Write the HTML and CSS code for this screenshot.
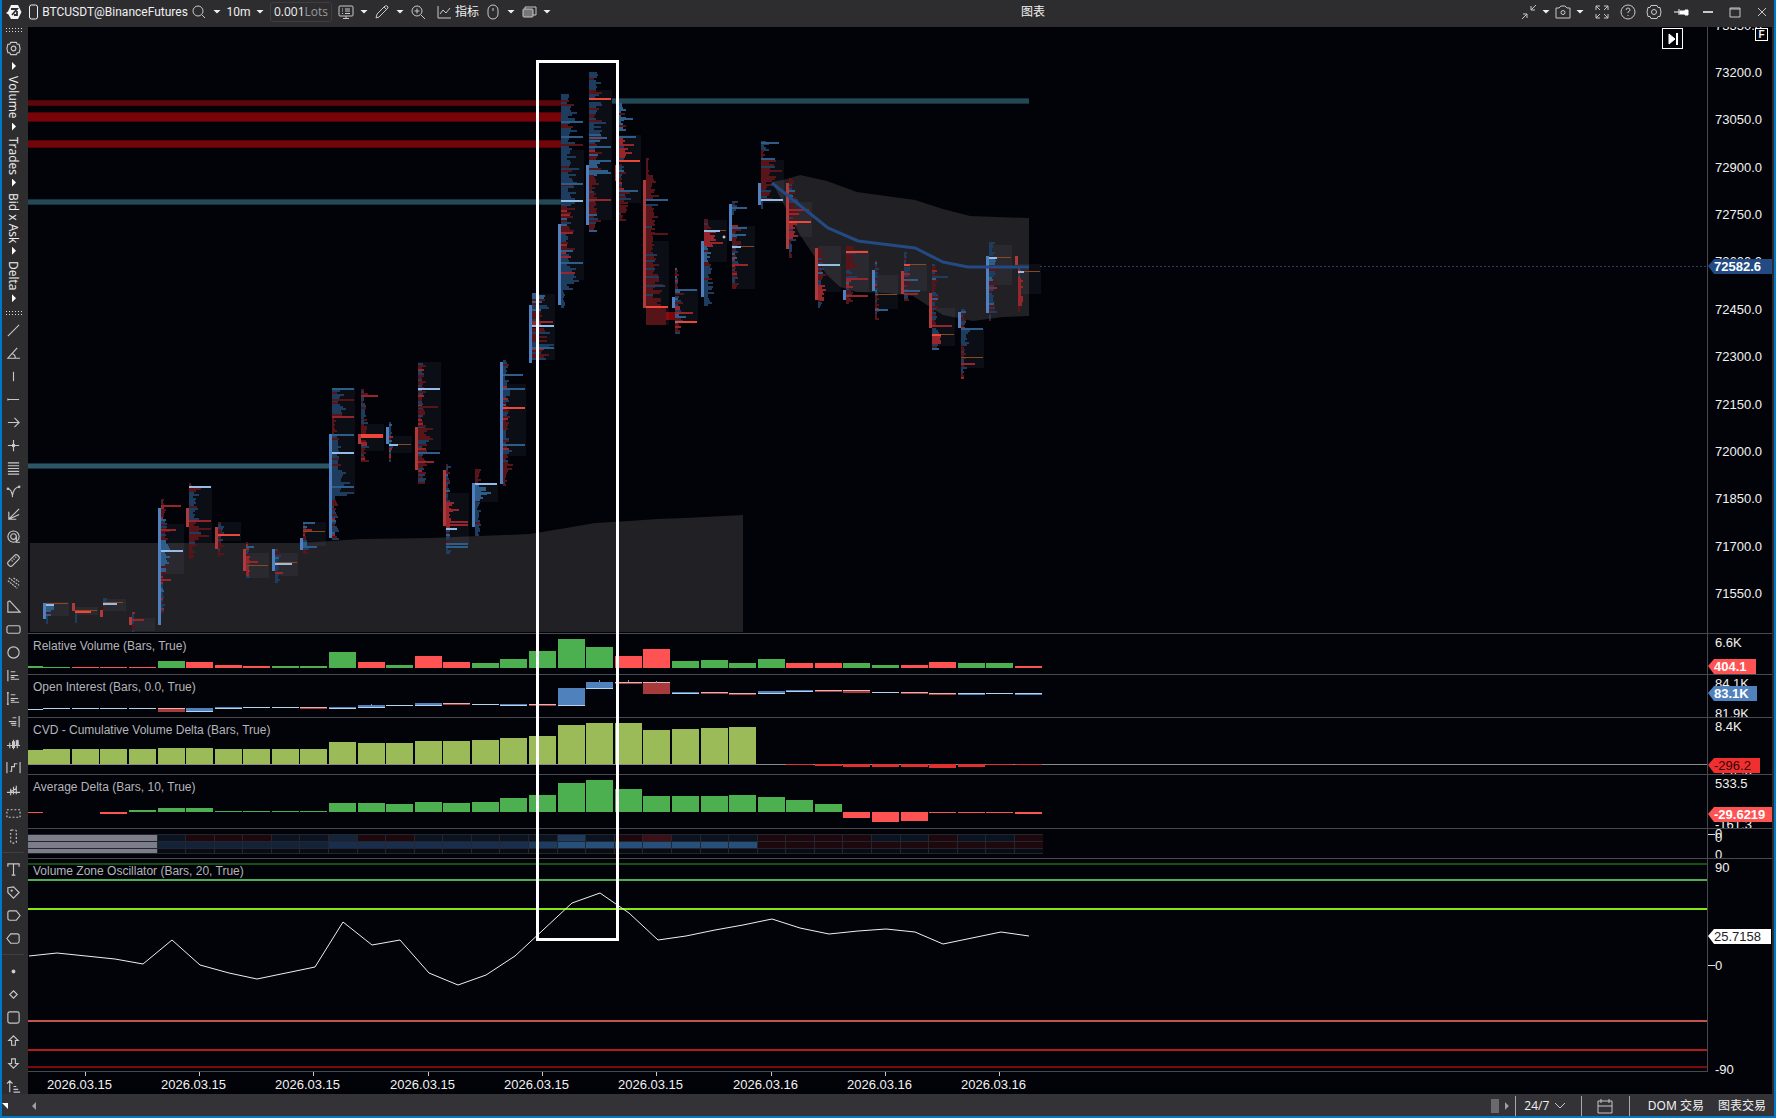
FILE: index.html
```html
<!DOCTYPE html>
<html lang="zh">
<head>
<meta charset="utf-8">
<title>图表</title>
<link rel="stylesheet" href="styles.css">
</head>
<body>
<div class="window">
  <header class="toolbar">
    <div class="tools">
      <svg class="logo" viewBox="0 0 16 16"><path fill="#f4f4f4" d="M5 1h7l3.500 7-3.500 7H5L2.500 10.500 0 9l2-1.500z"/><path fill="none" stroke="#2d2d30" stroke-width="1.800" d="M5 5h6l-5 6M11 7v4H8"/></svg>
      <svg class="phone" viewBox="0 0 10 16"><rect x="1" y="1" width="8" height="14" rx="2"/></svg>
      <button class="symbol">BTCUSDT@BinanceFutures</button>
      <button aria-label="Search"><svg viewBox="0 0 16 16"><circle cx="7" cy="7" r="5"/><path d="M11 11l3 3"/></svg></button>
      <button class="caret" aria-label="Search options"></button>
      <button class="interval">10m</button>
      <button class="caret" aria-label="Intervals"></button>
      <button class="lots"><b>0.001</b>Lots</button>
      <button aria-label="Template"><svg viewBox="0 0 16 16"><rect x="1" y="2" width="14" height="10" rx="1"/><path d="M4 5h1M7 5h5M4 7h1M7 7h5M4 9.500h1M7 9.500h5M8 12v2M5 14.500h6"/></svg></button>
      <button class="caret" aria-label="Template options"></button>
      <button aria-label="Draw"><svg viewBox="0 0 16 16"><path d="M2 14l1-4 8-8q2-1 3 1 0 1-1 2l-8 8zM10 3l3 3"/></svg></button>
      <button class="caret" aria-label="Drawing options"></button>
      <button aria-label="Zoom in"><svg viewBox="0 0 16 16"><circle cx="7" cy="7" r="5"/><path d="M11 11l4 4M4.500 7h5M7 4.500v5"/></svg></button>
      <button class="indicators"><svg viewBox="0 0 16 16"><path d="M2 2v12h13M4 10l3-4 3 3 4-5"/></svg>指标</button>
      <button aria-label="Mouse"><svg viewBox="0 0 16 16"><rect x="3" y="1" width="10" height="14" rx="5"/><path d="M8 4v3"/></svg></button>
      <button class="caret" aria-label="Mouse options"></button>
      <button aria-label="Windows"><svg viewBox="0 0 16 16"><rect x="2" y="5" width="10" height="8" rx="1" fill="#77777a"/><path d="M4 5V3h11v8h-3"/></svg></button>
      <button class="caret" aria-label="Window options"></button>
    </div>
    <h1>图表</h1>
    <div class="controls">
      <button aria-label="Collapse"><svg viewBox="0 0 16 16"><path d="M1 15l5-5M2 10h4v4M15 1l-5 5M10 2v4h4"/></svg></button>
      <button class="caret" aria-label="Collapse options"></button>
      <button aria-label="Snapshot"><svg viewBox="0 0 16 16"><path d="M1 4h3l2-2h4l2 2h3v10H1z"/><circle cx="8" cy="8.500" r="2"/></svg></button>
      <button class="caret" aria-label="Snapshot options"></button>
      <button aria-label="Full screen"><svg viewBox="0 0 16 16"><path d="M2 6V2h4M2 2l4 4M10 2h4v4M14 2l-4 4M2 10v4h4M2 14l4-4M14 10v4h-4M14 14l-4-4"/></svg></button>
      <button aria-label="Help"><svg viewBox="0 0 16 16"><circle cx="8" cy="8" r="7"/><path d="M6 6q0-2 2-2t2 2q0 1-2 2v1M8 11v1"/></svg></button>
      <button aria-label="Settings"><svg viewBox="0 0 16 16"><path d="M5 1.500h6l1 2h2l1 4.500-1 4.500h-2l-1 2H5l-1-2H2L1 8l1-4.500h2z"/><circle cx="8" cy="8" r="2.500"/></svg></button>
      <button aria-label="Pin"><svg viewBox="0 0 16 16"><path fill="#fff" stroke="#fff" d="M1 8h5M6 5v6M7 7h5V6h3v5h-3v-1H7z"/></svg></button>
      <button aria-label="Minimize"><svg viewBox="0 0 16 16"><path class="thick" d="M3 8h10"/></svg></button>
      <button aria-label="Maximize"><svg viewBox="0 0 16 16"><path d="M3 4h10v9H3zM3 5h10"/></svg></button>
      <button aria-label="Close"><svg viewBox="0 0 16 16"><path d="M4 4l8 8M12 4l-8 8"/></svg></button>
    </div>
  </header>

  <div class="body">
    <nav class="side">
      <i class="grip"></i>
      <button class="gear" aria-label="Settings"><svg viewBox="0 0 16 16"><path d="M5 1.500h6l1 2h2l1 4.500-1 4.500h-2l-1 2H5l-1-2H2L1 8l1-4.500h2z"/><circle cx="8" cy="8" r="2.500"/></svg></button>
      <i class="arrow"></i>
      <button class="mode">Volume</button><i class="arrow"></i>
      <button class="mode">Trades</button><i class="arrow"></i>
      <button class="mode">Bid x Ask</button><i class="arrow"></i>
      <button class="mode">Delta</button><i class="arrow"></i>
      <i class="grip"></i>
      <div class="set">
        <button aria-label="Line"><svg viewBox="0 0 16 16"><path d="M2 14L14 2"/></svg></button>
        <button aria-label="Angle"><svg viewBox="0 0 16 16"><path d="M12 2L2 13h13M6 8q4 1 4 5"/></svg></button>
        <button aria-label="Vertical line"><svg viewBox="0 0 16 16"><path d="M8 3v10"/></svg></button>
        <button aria-label="Horizontal line"><svg viewBox="0 0 16 16"><path d="M2 8h12M2 7v2"/></svg></button>
        <button aria-label="Ray"><svg viewBox="0 0 16 16"><path d="M2 8h12M9 3l5 5-5 5"/></svg></button>
        <button aria-label="Cross"><svg viewBox="0 0 16 16"><path d="M2 8h12M8 2v12M7 7h2v2H7z"/></svg></button>
        <button aria-label="Levels"><svg viewBox="0 0 16 16"><path d="M2 2h12M2 5h12M2 8h12M2 11h12M2 14h12"/></svg></button>
        <button aria-label="Pitchfork"><svg viewBox="0 0 16 16"><path d="M2 5q4 0 5 9M7 12q1-8 7-9"/><circle cx="2" cy="5" r=".8"/><circle cx="14" cy="3" r=".8"/></svg></button>
        <button aria-label="Fan"><svg viewBox="0 0 16 16"><path d="M14 2L3 13M3 5v8h8M3 13l11-5"/></svg></button>
        <button aria-label="Spiral"><svg viewBox="0 0 16 16"><circle cx="8" cy="7" r="6"/><circle cx="8" cy="7" r="3"/><path d="M11 7v6h4"/></svg></button>
        <button aria-label="Ruler"><svg viewBox="0 0 16 16"><rect x="1" y="5" width="14" height="6" rx="2" transform="rotate(-45 8 8)"/><path d="M6 8l1 1M8 6l1 1M10 4l1 1"/></svg></button>
        <button aria-label="Channel"><svg viewBox="0 0 16 16"><path stroke-dasharray="2 1" d="M2 5l10 8M3 2l11 8M8 2l6 4"/></svg></button>
        <button aria-label="Triangle"><svg viewBox="0 0 16 16"><path d="M2 14V3l2-1 11 12z"/></svg></button>
        <button aria-label="Rectangle"><svg viewBox="0 0 16 16"><rect x="1" y="4" width="14" height="8" rx="2"/></svg></button>
        <button aria-label="Ellipse"><svg viewBox="0 0 16 16"><circle cx="8" cy="8" r="6"/></svg></button>
        <button aria-label="Left profile"><svg viewBox="0 0 16 16"><path d="M2 2v12M5 4h5M5 8h8M5 12h9M5 10h4"/></svg></button>
        <button aria-label="Dynamic profile"><svg viewBox="0 0 16 16"><path d="M2 1v14M5 4h5M5 8h8M5 12h9M5 10h4M1 2h2M1 14h2"/></svg></button>
        <button aria-label="Right profile"><svg viewBox="0 0 16 16"><path d="M14 2v12M7 4h4M3 8h8M6 12h5M5 10h6"/></svg></button>
        <button aria-label="Bars"><svg viewBox="0 0 16 16"><path d="M1 9h14M4 6v6M8 3v10M12 3v9M7 5h2v6H7zM11 4h2v5h-2z"/></svg></button>
        <button aria-label="Steps"><svg viewBox="0 0 16 16"><path d="M1 2v12M15 2v12M4 12h2V7h3V4h3"/></svg></button>
        <button aria-label="Pattern"><svg viewBox="0 0 16 16"><path d="M1 10h14M5 6v7M8 4v8M11 3v9M5 9l6-3"/></svg></button>
        <button aria-label="Horizontal range"><svg viewBox="0 0 16 16"><rect x="1" y="4" width="14" height="8" stroke-dasharray="2 2"/></svg></button>
        <button aria-label="Vertical range"><svg viewBox="0 0 16 16"><rect x="5" y="1" width="6" height="14" rx="1" stroke-dasharray="2 2"/></svg></button>
      </div>
      <div class="set">
        <button aria-label="Text"><svg viewBox="0 0 16 16"><path d="M2 5V2h12v3M8 2v12M6 14h4"/></svg></button>
        <button aria-label="Tag"><svg viewBox="0 0 16 16"><path d="M2 3l6-1 6 6-6 6-6-6z"/><circle cx="6" cy="6" r=".6"/></svg></button>
        <button aria-label="Right label"><svg viewBox="0 0 16 16"><path d="M4 3h7l4 5-4 5H4q-2 0-2-2V5q0-2 2-2z"/></svg></button>
        <button aria-label="Left label"><svg viewBox="0 0 16 16"><path d="M12 3H5L1 8l4 5h7q2 0 2-2V5q0-2-2-2z"/></svg></button>
      </div>
      <div class="set">
        <button aria-label="Dot"><svg viewBox="0 0 16 16"><circle cx="8" cy="8" r="1.500" fill="#ddd"/></svg></button>
        <button aria-label="Diamond"><svg viewBox="0 0 16 16"><path d="M8 4l4 4-4 4-4-4z"/></svg></button>
        <button aria-label="Square"><svg viewBox="0 0 16 16"><rect x="2" y="2" width="12" height="12" rx="2"/></svg></button>
        <button aria-label="Up"><svg viewBox="0 0 16 16"><path d="M8 3l5 5h-3v5H6V8H3z"/></svg></button>
        <button aria-label="Down"><svg viewBox="0 0 16 16"><path d="M8 13l5-5h-3V3H6v5H3z"/></svg></button>
        <button aria-label="Order"><svg viewBox="0 0 16 16"><path d="M4 14V2M1 5l3-3 3 3M8 8h3M8 11h5M8 14h7"/></svg></button>
      </div>
    </nav>

    <main class="chart">
      <section class="pane price"><svg class="plot" id="price"></svg><svg class="scale" id="price-scale"></svg>
        <button class="jump" aria-label="Latest bar"><svg viewBox="0 0 16 16"><path fill="#fff" stroke="#fff" d="M4 3l6 5-6 5z"/><path class="thick" stroke="#fff" d="M12 2v12"/></svg></button>
        <button class="fix">F</button>
      </section>
      <section class="pane rv"><svg class="plot" id="rv"></svg><svg class="scale" id="rv-scale"></svg><h2>Relative Volume (Bars, True)</h2></section>
      <section class="pane oi"><svg class="plot" id="oi"></svg><svg class="scale" id="oi-scale"></svg><h2>Open Interest (Bars, 0.0, True)</h2></section>
      <section class="pane cvd"><svg class="plot" id="cvd"></svg><svg class="scale" id="cvd-scale"></svg><h2>CVD - Cumulative Volume Delta (Bars, True)</h2></section>
      <section class="pane ad"><svg class="plot" id="ad"></svg><svg class="scale" id="ad-scale"></svg><h2>Average Delta (Bars, 10, True)</h2></section>
      <section class="pane heat"><svg class="plot" id="heat"></svg><svg class="scale" id="heat-scale"></svg></section>
      <section class="pane vzo"><svg class="plot" id="vzo"></svg><svg class="scale" id="vzo-scale"></svg><h2>Volume Zone Oscillator (Bars, 20, True)</h2></section>
      <svg class="dates" id="dates"></svg>
      <div class="mark"></div>
    </main>
  </div>

  <footer class="status">
    <i class="corner"></i>
    <button class="scroll first" aria-label="Scroll left"><i class="left"></i></button>
    <span class="track"></span>
    <span class="thumb"></span>
    <button class="scroll" aria-label="Scroll right"><i class="right"></i></button>
    <button class="session">24/7 <svg viewBox="0 0 16 16"><path d="M3 5l5 5 5-5"/></svg></button>
    <button class="calendar" aria-label="Calendar"><svg viewBox="0 0 16 16"><path d="M1 3h14v12H1zM1 8h14M4 1v4M12 1v4"/></svg></button>
    <button class="trade">DOM 交易</button>
    <button class="trade">图表交易</button>
  </footer>
</div>
<script src="chart.js"></script>
</body>
</html>
```
FILE: styles.css
```css
* { box-sizing: border-box; }
html, body { height: 100%; }
body {
  margin: 0;
  background: #2d2d30;
  color: #f0f0f0;
  font: 12px/16px "Noto Sans", "Noto Sans CJK SC", sans-serif;
}
button {
  margin: 0;
  padding: 0;
  border: 0;
  background: none;
  color: inherit;
  font: inherit;
  display: flex;
  align-items: center;
  justify-content: center;
  flex: none;
}
button svg, .phone {
  width: 16px;
  height: 16px;
  fill: none;
  stroke: #c8c8ca;
  stroke-width: 1;
}
.thick { stroke-width: 2; }
.window {
  height: 100vh;
  min-height: 1100px;
  display: flex;
  flex-direction: column;
  border: solid #0078c8;
  border-width: 0 2px 2px;
}

.toolbar {
  height: 27px;
  flex: none;
  display: flex;
  align-items: center;
  padding: 0 4px 4px;
}
.tools { display: flex; align-items: center; gap: 6px; }
.logo { width: 16px; height: 16px; }
.phone { width: 11px; stroke: #f0f0f0; }
.symbol { font-family: Roboto, sans-serif; width: 140px; white-space: nowrap; }
.interval { width: 23px; font-family: Roboto, sans-serif; }
.caret {
  width: 8px;
  height: 4px;
  background: #f0f0f0;
  clip-path: polygon(0 0, 100% 0, 50% 100%);
}
.lots {
  width: 62px;
  height: 20px;
  border: 1px solid #3e3e42;
  border-radius: 3px;
  color: #9a9a9c;
  font-family: "Open Sans", sans-serif;
}
.lots b { font-weight: 400; color: #f0f0f0; }
.indicators { gap: 3px; margin-left: 4px; }
.toolbar h1 { flex: 1; margin: 0; padding-right: 6px; font: inherit; text-align: center; }
.controls { display: flex; align-items: center; gap: 5px; }
.controls button:nth-child(n+5) { margin-left: 5px; }
.controls button:nth-child(n+8) { margin-left: 6px; }

.body { flex: 1; display: flex; min-height: 0; }
.side {
  width: 26px;
  flex: none;
  display: flex;
  flex-direction: column;
  align-items: center;
  padding-right: 4px;
  overflow: hidden;
}
.side svg { width: 15px; height: 15px; stroke-width: 1.2; }
.grip {
  width: 17px;
  height: 6px;
  flex: none;
  background: radial-gradient(circle, #ddd 30%, transparent 40%) 0 0 / 3px 3px;
}
.gear { height: 24px; margin: 3px 0 2px; }
.arrow {
  width: 4px;
  height: 8px;
  margin: 0 0 6px 2px;
  flex: none;
  background: #fff;
  clip-path: polygon(0 0, 100% 50%, 0 100%);
}
.mode { writing-mode: vertical-rl; margin-bottom: 4px; font-family: "Open Sans", sans-serif; }
.arrow + .grip { margin-top: 2px; }
.set { padding-bottom: 4px; margin-bottom: 5px; border-bottom: 1px solid #3f3f43; }
.grip + .set { padding-top: 3px; }
.set:last-of-type { border: 0; margin: 0; padding: 0; }
.set button { width: 22px; height: 23px; }

.chart {
  flex: 1;
  min-width: 0;
  margin-right: 2px;
  display: grid;
  grid-template-rows: 1fr 41px 43px 57px 54px 30px 214px 22px;
  background: #020308;
  position: relative;
  overflow: hidden;
  font-family: "Liberation Sans", Arial, sans-serif;
}
.pane {
  display: flex;
  min-height: 0;
  min-width: 0;
  position: relative;
  border-top: 1px solid #48484e;
}
.price { border: 0; }
.plot { flex: 1; min-width: 0; height: 100%; display: block; }
.scale { width: 65px; height: 100%; flex: none; overflow: visible; border-left: 1px solid #48484e; }
.price .scale { overflow: hidden; }
.scale text, .dates text { font-size: 13px; fill: #f2f2f2; }
.scale .strong { font-weight: 700; }
.pane h2 {
  position: absolute;
  top: 4px;
  left: 5px;
  margin: 0;
  font: 12px/16px "Liberation Sans", Arial, sans-serif;
  color: #b4b4ba;
}
.vzo .plot { border-bottom: 1px solid #48484e; }
.dates { width: 100%; height: 100%; display: block; }
.jump {
  position: absolute;
  right: 89px;
  top: 1px;
  width: 21px;
  height: 21px;
  border: 1px solid #fff;
}
.fix {
  position: absolute;
  right: 4px;
  top: 1px;
  width: 13px;
  height: 13px;
  border: 1px solid #fff;
  background: #020308;
  font: 700 10px/11px "Liberation Sans", Arial, sans-serif;
}
.mark {
  position: absolute;
  left: 508px;
  top: 33px;
  width: 83px;
  height: 881px;
  border: 3px solid #fff;
}

.status {
  height: 22px;
  flex: none;
  display: flex;
  align-items: center;
  padding: 2px 8px 0 0;
  background: #333337;
}
.corner {
  width: 6px;
  height: 6px;
  background: #fff;
  clip-path: polygon(0 0, 100% 0, 100% 100%);
}
.scroll { width: 16px; height: 20px; }
.first { margin-left: 18px; }
.left, .right { width: 4px; height: 8px; background: #a0a0a2; }
.left { clip-path: polygon(100% 0, 100% 100%, 0 50%); }
.right { clip-path: polygon(0 0, 100% 50%, 0 100%); }
.track { flex: 1; }
.thumb { width: 8px; height: 14px; background: #6a6a6e; }
.session, .calendar { height: 20px; border-left: 1px solid #a8a8aa; }
.session { width: 66px; padding-right: 4px; font-family: "Open Sans", sans-serif; gap: 3px; }
.calendar { width: 48px; }
.trade { margin-left: 14px; }
.calendar + .trade { border-left: 1px solid #a8a8aa; margin: 0; padding-left: 18px; height: 20px; }
```
FILE: chart.js
```js
const NS = 'http://www.w3.org/2000/svg';
const byId = id => document.getElementById(id);

function add(parent, name, attrs, text) {
  const el = document.createElementNS(NS, name);
  for (const key in attrs) el.setAttribute(key, attrs[key]);
  if (text !== undefined) el.textContent = text;
  parent.appendChild(el);
  return el;
}
const rect = (p, x, y, width, height, fill) => add(p, 'rect', { x, y, width, height, fill });
const wideLine = (p, y, color, w) => add(p, 'rect', { x: 0, y, width: '100%', height: w, fill: color });
const shifted = (id, paneTop) => add(byId(id), 'g', { transform: `translate(-28 ${-paneTop})` });

const barX = n => n < 0 ? 28 : Math.round(43.2 + 28.58 * n);
const barW = n => n < 0 ? 15 : 27;

const C = {
  b: '#1e3c5e', r: '#581519', B: '#2f5d8a', R: '#96262b', H: '#ee4638',
  P: '#93bce6', O: '#87491f', body: { b: '#5080bd', r: '#ad3b3d' }
};

/* Price pane: sessions, levels and cluster bars */
const price = shifted('price', 27);

add(price, 'polygon', { fill: '#212024', points: '30,543 302,543 360,539 430,538 530,534 566,528 595,523 629,521 657,519 685,518 743,515 743,632 30,632' });
add(price, 'polygon', { fill: '#212024', points: '772,182 787,179 800,175 827,181 857,192 915,200 943,209 970,216 1029,218 1029,316 1003,317 973,321 943,315 930,307 913,296 887,293 857,292 840,287 827,275 800,235' });

function level(x1, x2, y, h, edge, core) {
  rect(price, x1, y - h / 2, x2 - x1, h, edge);
  rect(price, x1, y - h / 2 + 1, x2 - x1, h - 2, core);
}
level(28, 561, 103, 6, '#4a0508', '#5e0609');
level(28, 561, 117, 10, '#4e0407', '#78040a');
level(28, 561, 144, 8, '#4e0407', '#74040a');
level(28, 561, 202, 6, '#16303c', '#244856');
level(28, 329, 466, 6, '#16303c', '#2b5767');
level(612, 1029, 101, 6, '#16303c', '#244856');
rect(price, 666, 312, 10, 8, '#80040a');

let seed = 41;
const rand = () => (seed = (seed * 16807) % 2147483647) / 2147483647;

/* [bar, direction, bodyTop, bodyBottom, areaTop, areaBottom, profile zones, highlighted rows] */
const clusters = [
  [0, 'b', 603, 619, 602, 616, [[604, 616, 'B', 9], [616, 624, 'b', 3]], [[603, 'O', 22], [604, 'P', 8]]],
  [1, 'r', 603, 611, 607, 615, [[611, 623, 'b', 3]], [[610, 'O', 22], [611, 'H', 16]]],
  [2, 'r', 610, 617, 599, 611, [[598, 610, 'b', 5]], [[602, 'O', 20], [603, 'P', 14]]],
  [3, 'r', 617, 625, 618, 631, [[612, 632, 'm', 4]], [[619, 'R', 12]]],
  [4, 'b', 508, 625, 524, 574, [[499, 524, 'm', 7], [524, 540, 'r', 11], [540, 574, 'B', 12], [574, 614, 'm', 4]], [[505, 'R', 20], [529, 'R', 15], [550, 'P', 22], [579, 'R', 10]]],
  [5, 'r', 508, 527, 486, 543, [[488, 520, 'b', 13], [483, 487, 'r', 6], [520, 545, 'r', 16], [545, 559, 'r', 7]], [[486, 'P', 22], [520, 'R', 22], [528, 'r', 22], [535, 'r', 20]]],
  [6, 'r', 527, 549, 522, 541, [[522, 533, 'b', 8], [527, 556, 'r', 7]], [[534, 'H', 22]]],
  [7, 'r', 549, 571, 553, 578, [[542, 556, 'm', 5], [556, 578, 'R', 7]], [[546, 'B', 8], [561, 'R', 12], [565, 'O', 22]]],
  [8, 'b', 549, 571, 553, 576, [[549, 583, 'm', 7]], [[562, 'O', 22], [563, 'P', 17], [572, 'R', 8]]],
  [9, 'b', 538, 550, 522, 546, [[522, 553, 'm', 6]], [[522, 'B', 12], [529, 'R', 9], [531, 'O', 22], [546, 'B', 14]]],
  [10, 'b', 434, 538, 388, 494, [[388, 416, 'b', 16], [416, 434, 'r', 5], [434, 480, 'b', 16], [480, 496, 'b', 21], [496, 540, 'm', 8]], [[388, 'B', 22], [399, 'r', 22], [416, 'R', 22], [434, 'B', 22], [452, 'P', 22], [486, 'B', 22], [492, 'b', 22]]],
  [11, 'r', 434, 444, 424, 451, [[389, 420, 'b', 8], [420, 433, 'r', 10], [440, 461, 'm', 9]], [[395, 'R', 17], [434, 'H', 22], [436, 'H', 22]]],
  [12, 'b', 427, 444, 436, 453, [[422, 461, 'm', 5]], [[444, 'O', 22], [444, 'P', 9]]],
  [13, 'r', 427, 470, 362, 450, [[363, 428, 'm', 11], [428, 440, 'r', 16], [440, 484, 'm', 12]], [[388, 'P', 22], [406, 'r', 20], [452, 'B', 22], [461, 'R', 16]]],
  [14, 'r', 470, 526, 493, 545, [[464, 500, 'm', 5], [500, 528, 'R', 9], [528, 554, 'm', 6]], [[509, 'R', 13], [521, 'R', 22], [524, 'R', 22], [528, 'P', 11], [543, 'B', 22], [546, 'B', 22]]],
  [15, 'b', 483, 527, 484, 502, [[469, 483, 'r', 10], [485, 502, 'B', 13], [502, 536, 'b', 7]], [[483, 'P', 22], [492, 'B', 16]]],
  [16, 'b', 362, 484, 384, 456, [[360, 384, 'b', 7], [384, 462, 'm', 9], [462, 472, 'r', 12], [472, 486, 'r', 5]], [[374, 'B', 20], [388, 'B', 22], [407, 'H', 22], [444, 'B', 22]]],
  [17, 'b', 305, 363, 294, 360, [[293, 303, 'B', 22], [303, 324, 'm', 22], [328, 350, 'm', 19], [350, 360, 'r', 22]], [[325, 'P', 22], [344, 'b', 22], [347, 'B', 22]]],
  [18, 'b', 224, 305, 150, 280, [[94, 104, 'b', 12], [104, 150, 'b', 22], [150, 200, 'b', 20], [200, 262, 'm', 16], [262, 290, 'b', 19], [290, 308, 'b', 7]], [[121, 'B', 22], [136, 'B', 22], [144, 'r', 22], [183, 'B', 22], [200, 'P', 22], [262, 'B', 22], [272, 'R', 14]]],
  [19, 'b', 165, 225, 90, 220, [[72, 98, 'b', 16], [102, 130, 'b', 17], [130, 160, 'm', 17], [160, 175, 'B', 20], [175, 200, 'r', 10], [200, 231, 'm', 15]], [[98, 'H', 22], [137, 'B', 18], [146, 'B', 22], [160, 'B', 22], [172, 'B', 22], [199, 'R', 22]]],
  [20, 'r', 165, 181, 135, 203, [[103, 130, 'B', 11], [136, 160, 'R', 14], [164, 190, 'm', 9], [190, 203, 'r', 18], [203, 220, 'r', 10]], [[118, 'B', 15], [136, 'B', 18], [144, 'R', 16], [160, 'H', 22], [190, 'B', 20]]],
  [21, 'r', 180, 308, 241, 325, [[158, 175, 'r', 5], [175, 200, 'r', 15], [204, 262, 'r', 15], [262, 307, 'r', 22]], [[199, 'B', 22], [233, 'r', 22], [285, 'b', 19], [306, 'H', 22]]],
  [22, 'b', 297, 308, 289, 322, [[268, 289, 'm', 6], [289, 295, 'B', 17], [296, 334, 'm', 9]], [[289, 'B', 22], [312, 'R', 18], [316, 'B', 11], [321, 'H', 22]]],
  [23, 'b', 241, 297, 220, 262, [[219, 230, 'r', 9], [231, 246, 'R', 16], [246, 262, 'B', 9], [262, 306, 'b', 12]], [[230, 'O', 22], [230, 'P', 16], [242, 'R', 19]]],
  [24, 'b', 204, 241, 226, 289, [[201, 215, 'b', 6], [225, 289, 'm', 10]], [[207, 'B', 15], [227, 'B', 15], [234, 'B', 14], [246, 'O', 22], [246, 'P', 9], [264, 'R', 16]]],
  [25, 'b', 183, 205, 160, 203, [[141, 150, 'b', 9], [150, 160, 'r', 5], [160, 182, 'r', 22], [182, 200, 'r', 15], [201, 208, 'b', 4]], [[142, 'B', 18], [158, 'B', 14], [199, 'P', 22]]],
  [26, 'r', 183, 249, 202, 237, [[178, 195, 'm', 8], [195, 220, 'm', 12], [223, 240, 'R', 12], [240, 257, 'r', 6]], [[209, 'R', 20], [221, 'H', 22]]],
  [27, 'r', 248, 300, 246, 292, [[248, 285, 'm', 8], [285, 300, 'R', 11], [300, 307, 'b', 4]], [[264, 'P', 22]]],
  [28, 'b', 290, 300, 250, 292, [[246, 278, 'r', 13], [280, 303, 'm', 8]], [[251, 'H', 22], [278, 'R', 22], [295, 'R', 22]]],
  [29, 'b', 270, 291, 275, 309, [[260, 320, 'm', 5]], [[294, 'O', 22], [309, 'B', 13]]],
  [30, 'r', 271, 294, 264, 291, [[252, 264, 'b', 3], [267, 300, 'm', 8]], [[264, 'O', 22], [264, 'H', 6], [279, 'B', 14], [290, 'B', 16], [293, 'R', 14]]],
  [31, 'r', 293, 328, 308, 346, [[264, 326, 'm', 7], [328, 334, 'b', 8], [336, 344, 'R', 17], [344, 350, 'm', 10]], [[276, 'b', 16], [325, 'R', 20], [334, 'O', 22], [334, 'H', 9]]],
  [32, 'b', 312, 328, 329, 368, [[309, 328, 'm', 7], [330, 345, 'b', 12], [345, 378, 'm', 6]], [[328, 'B', 22], [357, 'O', 22], [363, 'R', 14]]],
  [33, 'b', 256, 313, 245, 285, [[242, 256, 'b', 8], [258, 265, 'B', 10], [265, 313, 'm', 10], [313, 321, 'r', 3]], [[257, 'O', 22], [257, 'P', 8]]],
  [34, 'r', 256, 265, 264, 294, [[268, 306, 'R', 6], [306, 312, 'r', 3]], [[271, 'O', 22], [271, 'P', 6]]]
];

for (const [n, dir, bodyTop, bodyBottom, areaTop, areaBottom, zones, rows] of clusters) {
  const x = barX(n), px = x + 3;
  rect(price, px, areaTop, 23, areaBottom - areaTop, 'rgba(160,170,200,.07)');
  for (const [y1, y2, kind, width] of zones) {
    rect(price, px, y1, 1, y2 - y1, kind === 'r' || kind === 'R' ? C.r : C.b);
    for (let y = y1; y < y2; y += 2) {
      const flip = rand();
      let color = kind;
      if (kind === 'm') color = flip < .42 ? 'b' : flip < .5 ? 'B' : flip < .9 ? 'r' : 'R';
      else if (flip < .1) color = kind.toLowerCase() === 'b' ? 'r' : 'b';
      const w = Math.max(2, Math.round(width * (.3 + .7 * rand() * Math.sqrt(rand()))));
      rect(price, px, y, w, 2, C[color]);
    }
  }
  rect(price, x, bodyTop, 3, bodyBottom - bodyTop, C.body[dir]);
  for (const [y, color, w] of rows) rect(price, px, y, w, color === 'O' ? 1 : 2, C[color]);
}
/* Solid volume block at the foot of the sell-off bar */
rect(price, barX(21) + 3, 308, 20, 17, '#551418');

add(price, 'polyline', { fill: 'none', stroke: '#234a83', 'stroke-width': 3, points: '772,183 828,228 858,241 915,248 943,262 968,267 1029,267' });
add(byId('price'), 'line', { x1: 1012, x2: '100%', y1: 239.5, y2: 239.5, stroke: '#2a3f68', 'stroke-dasharray': '2 2' });
add(price, 'circle', { cx: 724, cy: 237, r: 1, fill: 'none', stroke: '#fff' });

/* Histogram panes; the first value is the partly visible bar at the left edge */
function histogram(id, paneTop, base, values, up, down) {
  const g = shifted(id, paneTop);
  values.forEach((v, i) => {
    if (v) rect(g, barX(i - 1), v > 0 ? base - v : base, barW(i - 1), Math.abs(v), v > 0 ? up : down);
  });
}
const rv = shifted('rv', 634);
[2, 1, -1, -1, -1, 7, -6, -3, -2, 2, 2, 16, -6, 3, -12, -6, 5, 9, 17, 29, 21, -12, -19, 7, 8, 5, 9, -5, -5, 5, 3, -3, -6, 5, 5, -2].forEach((v, i) => {
  const h = Math.abs(v);
  rect(rv, barX(i - 1), 668 - h, barW(i - 1), h, v > 0 ? '#4caf50' : '#ff5252');
});
wideLine(byId('cvd'), 46, '#8a8a8c', 1);
histogram('cvd', 718, 764, [14, 15, 15, 15, 15, 16, 16, 15, 15, 15, 15, 22, 21, 21, 23, 23, 24, 26, 28, 39, 41, 41, 34, 35, 36, 37, 0, -1, -2, -3, -3, -3, -4, -3, -1, -1], '#9bbb59', '#e03030');
histogram('ad', 775, 812, [-1, 0, 0, -2, 2, 4, 4, 1, 1, 1, 1, 9, 9, 8, 10, 9, 10, 14, 17, 29, 32, 23, 16, 16, 16, 17, 15, 12, 8, -6, -10, -9, -1, -1, -1, -2], '#4caf50', '#ff5252');

/* Open interest candles: [top, height, colour, open edge] */
const oi = shifted('oi', 675);
[[709, 1, 'b', 0], [708, 1, 'w', 0], [708, 1, 'w', 0], [708, 1, 'w', 0], [708, 1, 'w', 0], [708, 4, 'r', 0], [708, 4, 'b', 1], [707, 2, 'b', 1], [707, 1, 'w', 0], [707, 1, 'w', 0], [707, 2, 'r', 0], [707, 2, 'b', 1], [705, 3, 'b', 1], [705, 1, 'w', 0], [703, 3, 'b', 1], [703, 2, 'r', 0], [704, 1, 'w', 0], [704, 2, 'b', 1], [704, 2, 'r', 0], [688, 18, 'b', 1], [682, 7, 'b', 1], [682, 2, 'r', 0], [682, 12, 'r', 0], [692, 2, 'b', 1], [692, 2, 'r', 0], [693, 2, 'r', 0], [691, 3, 'b', 1], [690, 2, 'b', 1], [690, 2, 'r', 0], [690, 3, 'r', 0], [692, 1, 'w', 0], [692, 2, 'r', 0], [693, 2, 'r', 0], [693, 2, 'b', 0], [693, 1, 'w', 0], [693, 2, 'b', 0]].forEach(([y, h, kind, low], i) => {
  const x = barX(i - 1), w = barW(i - 1);
  rect(oi, x, y, w, h, kind === 'r' ? '#a93a3c' : '#4f81bd');
  rect(oi, x, low ? y + h - 1 : y, w, 1, kind === 'r' ? '#e0b4b8' : '#b4d4ec');
});
for (const [n, y] of [[11, 704], [19, 680], [20, 680], [21, 681]]) rect(oi, barX(n) + 13, y, 1, 2, '#7f93ac');

/* Heat map */
const heat = shifted('heat', 829);
rect(heat, 28, 834, 1015, 20, '#24252d');
for (const [y, h] of [[835, 6], [842, 6], [849, 4]]) rect(heat, 28, y, 129, h, '#7b7e8a');
const upperRow = 'nrrrnnbrrnnnnnsnrhnnnrrrrnnrnnr';
const middleRow = 'ddddddeeeeeeefgggggggrrrrrrrrrr';
const shade = { n: '#0a1420', r: '#1d080e', b: '#14243a', s: '#203c5c', h: '#3c1016', d: '#132236', e: '#182e4c', f: '#1d3c60', g: '#264f7a' };
for (let i = 0; i < 31; i++) {
  const x = barX(i + 4), w = barX(i + 5) - x - 1;
  rect(heat, x, 835, w, 6, shade[upperRow[i]]);
  rect(heat, x, 842, w, 6, shade[middleRow[i]]);
  rect(heat, x, 849, w, 4, '#080a14');
}

/* Oscillator */
const vzo = byId('vzo');
[[863, '#145016'], [879, '#4caf50'], [908, '#86e810'], [1020, '#c4524f'], [1049, '#b01c1e'], [1066, '#7c090b']].forEach(([y, c]) => wideLine(vzo, y - 859, c, 2));
const osc = [956, 953, 956, 959, 964, 940, 965, 973, 979, 973, 967, 922, 945, 940, 973, 985, 975, 956, 930, 903, 893, 913, 940, 936, 930, 925, 919, 928, 934, 931, 929, 932, 944, 938, 932, 936];
add(shifted('vzo', 859), 'polyline', { fill: 'none', stroke: '#f0f0f0', points: osc.map((y, i) => `${Math.round(57.4 + 28.58 * (i - 1))},${y}`).join(' ') });

/* Value scales */
function labels(id, paneTop, items) {
  for (const [y, text] of items) add(byId(id), 'text', { x: 7, y: y - paneTop + 5 }, text);
}
function tag(id, paneTop, y, width, fill, text, cls, color) {
  const t = y - paneTop, svg = byId(id);
  add(svg, 'polygon', { fill, points: `0,${t} 6,${t - 7} ${width},${t - 7} ${width},${t + 8} 6,${t + 8}` });
  add(svg, 'text', { x: 6, y: t + 5, class: cls, style: `fill:${color}` }, text);
}
labels('price-scale', 27, [[25, '73350.0'], [72, '73200.0'], [119, '73050.0'], [167, '72900.0'], [214, '72750.0'], [261, '72600.0'], [309, '72450.0'], [356, '72300.0'], [404, '72150.0'], [451, '72000.0'], [498, '71850.0'], [546, '71700.0'], [593, '71550.0']]);
tag('price-scale', 27, 266, 64, '#214b82', '72582.6', 'strong', '#fff');
labels('rv-scale', 634, [[642, '6.6K']]);
tag('rv-scale', 634, 666, 48, '#ff5252', '404.1', 'strong', '#fff');
labels('oi-scale', 675, [[683, '84.1K'], [713, '81.9K']]);
tag('oi-scale', 675, 693, 49, '#4f81bd', '83.1K', 'strong', '#fff');
labels('cvd-scale', 718, [[726, '8.4K'], [770, '-142.3']]);
tag('cvd-scale', 718, 765, 52, '#f03030', '-296.2', '', '#300');
labels('ad-scale', 775, [[783, '533.5'], [824, '-161.3']]);
tag('ad-scale', 775, 814, 64, '#ff5252', '-29.6219', 'strong', '#fff');
labels('heat-scale', 829, [[833, '0'], [837, '0'], [854, '0']]);
labels('vzo-scale', 859, [[867, '90'], [965, '0'], [1069, '-90']]);
tag('vzo-scale', 859, 936, 63, '#fff', '25.7158', '', '#222');
rect(byId('heat-scale'), 0, 5, 7, 1, '#ddd');
rect(byId('vzo-scale'), 0, 106, 7, 1, '#ddd');

/* Dates */
['15', '15', '15', '15', '15', '15', '16', '16', '16'].forEach((day, i) => {
  const x = Math.round(57 + 28.58 * (1 + i * 4)) - 29;
  rect(byId('dates'), x, 0, 1, 4, '#ccc');
  add(byId('dates'), 'text', { x: x - 38, y: 17 }, `2026.03.${day}`);
});
```
